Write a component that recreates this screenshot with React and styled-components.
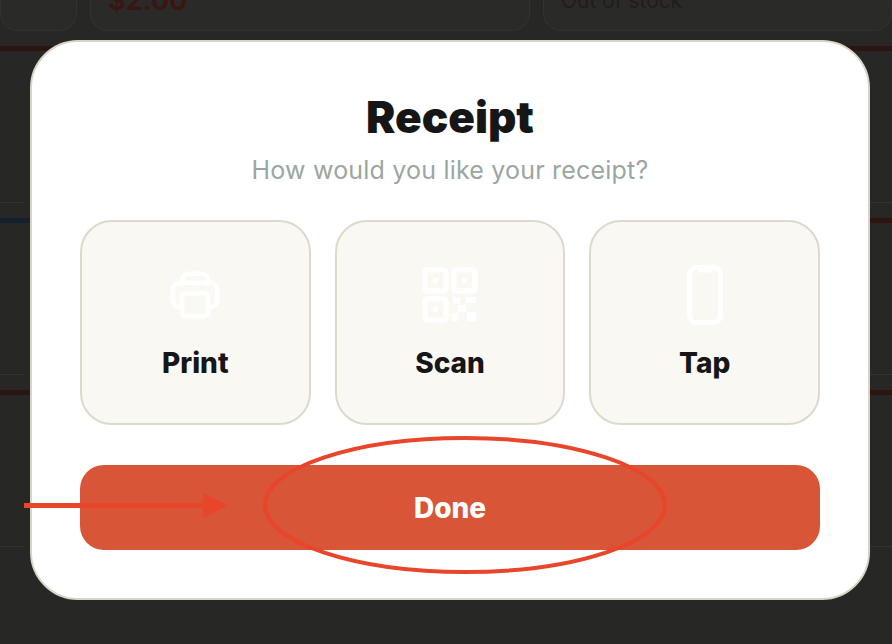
import React from "react";
import styled, { createGlobalStyle } from "styled-components";

const GlobalStyle = createGlobalStyle`
  html, body {
    margin: 0;
    padding: 0;
    height: 100%;
    background: #262625;
    font-family: "Inter", "Liberation Sans", sans-serif;
  }
`;

const Page = styled.div`
  position: relative;
  width: 892px;
  height: 644px;
  overflow: hidden;
  background: #272726;
`;

const Backdrop = styled.div`
  display: flex;
  flex-direction: column;
  margin-top: -126px;
`;

const Shelf = styled.section`
  display: flex;
  flex-direction: column;
  height: 172px;
`;

const Strip = styled.div`
  display: flex;
  height: 5px;
  margin-bottom: 10px;
`;

const StripPart = styled.div`
  flex: 1;
  background: ${(p) => p.$color};
`;

const Cards = styled.div`
  display: grid;
  grid-template-columns: ${(p) => p.$columns};
  gap: 13px;
  height: 142px;
`;

const BackCard = styled.div`
  box-sizing: border-box;
  display: flex;
  flex-direction: column;
  justify-content: flex-end;
  padding: 0 0 17px 17px;
  border: 1px solid #323231;
  border-top: 0;
  border-radius: 0 0 18px 18px;
  background: #2a2a29;
`;

const FlatCard = styled.div`
  border-bottom: 1px solid #313130;
`;

const Price = styled.span`
  color: #3a1512;
  font-size: 27px;
  font-weight: 700;
  line-height: 24px;
`;

const Stock = styled.span`
  color: #261a1a;
  font-size: 21px;
  line-height: 24px;
`;

const Overlay = styled.div`
  position: absolute;
  inset: 0;
  padding: 40px 0 0 30px;
`;

const Modal = styled.div`
  box-sizing: border-box;
  display: flex;
  flex-direction: column;
  align-items: center;
  width: 840px;
  height: 560px;
  padding: 52px 48px 0;
  border: 2px solid #d8d4c8;
  border-radius: 48px;
  background: #ffffff;
`;

const Title = styled.h1`
  margin: -1px 0 0;
  color: #161616;
  font-size: 44px;
  font-weight: 900;
  line-height: 48px;
`;

const Subtitle = styled.p`
  margin: 13px 0 0;
  color: #9aa6a2;
  font-size: 25px;
  letter-spacing: 0.2px;
  line-height: 32px;
`;

const Options = styled.div`
  display: grid;
  grid-template-columns: repeat(3, 1fr);
  gap: 24px;
  width: 100%;
  margin-top: 34px;
`;

const Option = styled.button`
  box-sizing: border-box;
  display: flex;
  flex-direction: column;
  align-items: center;
  height: 205px;
  padding: 41px 0 0;
  border: 2px solid #ddd9cd;
  border-radius: 32px;
  background: #faf8f3;
  color: #161616;
  font-family: inherit;
  font-size: 28px;
  font-weight: 800;
`;

const IconSlot = styled.span`
  display: flex;
  align-items: center;
  justify-content: center;
  height: 64px;
`;

const OptionLabel = styled.span`
  margin-top: 20px;
  line-height: 32px;
`;

const Icon = styled.svg`
  display: block;
  fill: none;
  stroke: #ffffff;
  stroke-width: 5;
  stroke-linejoin: round;
  stroke-linecap: round;
`;

const Done = styled.button`
  width: 100%;
  height: 85px;
  margin-top: 40px;
  border: 0;
  border-radius: 24px;
  background: #d85537;
  color: #ffffff;
  font-family: inherit;
  font-size: 28px;
  font-weight: 800;
`;

const Annotation = styled.svg`
  position: absolute;
  inset: 0;
  pointer-events: none;
`;

const PrintIcon = () => (
  <Icon width="50" height="48" viewBox="0 0 54 52">
    <path d="M13 14V10a7 7 0 0 1 7-7h14a7 7 0 0 1 7 7v4" />
    <path d="M13 39H10a7 7 0 0 1-7-7V20a7 7 0 0 1 7-7h34a7 7 0 0 1 7 7v12a7 7 0 0 1-7 7h-3" />
    <rect x="13" y="24" width="28" height="25" rx="4" />
  </Icon>
);

const ScanIcon = () => (
  <Icon width="56" height="56" viewBox="0 0 56 56">
    <rect x="3" y="3" width="21" height="21" rx="2" />
    <rect x="32" y="3" width="21" height="21" rx="2" />
    <rect x="3" y="32" width="21" height="21" rx="2" />
    <path d="M11 11h5v5h-5zM40 11h5v5h-5zM11 40h5v5h-5z" fill="#fff" stroke="none" />
    <path
      d="M31 30h7v7h-7zM44 30h10v6h-10zM36 38h8v7h-8zM30 46h6v8h-6zM45 45h9v9h-9z"
      fill="#fff"
      stroke="none"
    />
  </Icon>
);

const TapIcon = () => (
  <Icon width="36" height="60" viewBox="0 0 36 60">
    <rect x="2.5" y="2.5" width="31" height="55" rx="7" />
    <path d="M13 5h10" />
  </Icon>
);

const options = [
  { label: "Print", icon: <PrintIcon /> },
  { label: "Scan", icon: <ScanIcon /> },
  { label: "Tap", icon: <TapIcon /> },
];

const red = "#2c1412";
const blue = "#14202c";

const shelves = [
  { colors: [red, red] },
  { colors: [red, red] },
  { colors: [blue, red] },
  { colors: [red, red] },
];

export default function App() {
  return (
    <Page>
      <GlobalStyle />
      <Backdrop>
        {shelves.map((shelf, i) => (
          <Shelf key={i}>
            <Strip>
              <StripPart $color={shelf.colors[0]} />
              <StripPart $color={shelf.colors[1]} />
            </Strip>
            {i === 0 ? (
              <Cards $columns="77px 440px 1fr">
                <BackCard />
                <BackCard>
                  <Price>$2.00</Price>
                </BackCard>
                <BackCard>
                  <Stock>Out of stock</Stock>
                </BackCard>
              </Cards>
            ) : (
              <Cards $columns="24px 1fr">
                <FlatCard />
                <FlatCard />
              </Cards>
            )}
          </Shelf>
        ))}
      </Backdrop>
      <Overlay>
        <Modal>
          <Title>Receipt</Title>
          <Subtitle>How would you like your receipt?</Subtitle>
          <Options>
            {options.map((o) => (
              <Option key={o.label}>
                <IconSlot>{o.icon}</IconSlot>
                <OptionLabel>{o.label}</OptionLabel>
              </Option>
            ))}
          </Options>
          <Done>Done</Done>
        </Modal>
      </Overlay>
      <Annotation width="892" height="644" viewBox="0 0 892 644">
        <ellipse cx="465" cy="505" rx="200" ry="67" fill="none" stroke="#e8452a" strokeWidth="4" />
        <path d="M24 505.5H205" stroke="#e8452a" strokeWidth="5" />
        <path d="M203 493L228 505.5L203 518Z" fill="#e8452a" />
      </Annotation>
    </Page>
  );
}
